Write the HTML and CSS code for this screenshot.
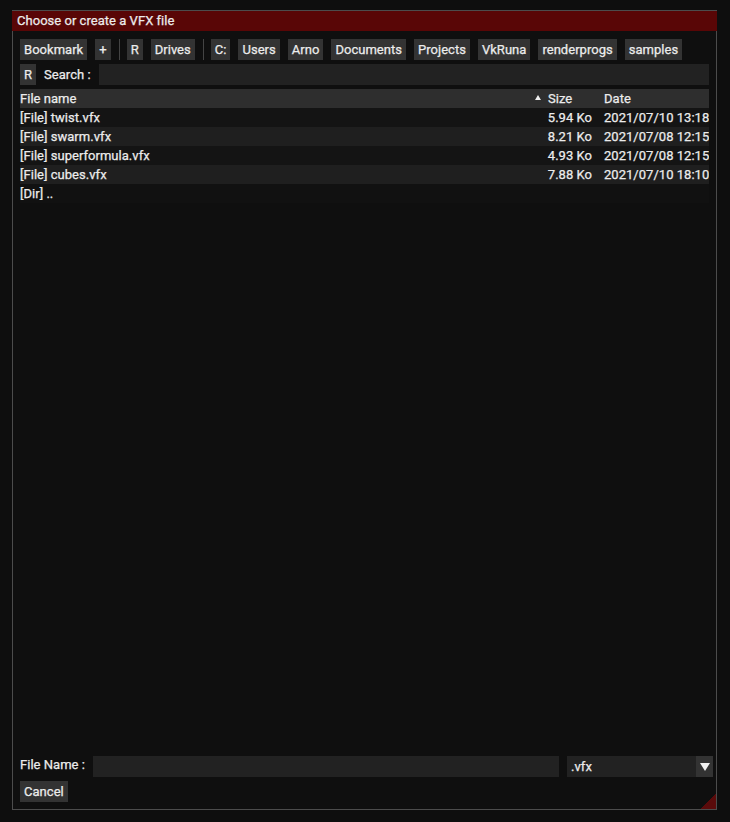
FILE: index.html
```html
<!DOCTYPE html>
<html>
<head>
<meta charset="utf-8">
<link rel="stylesheet" href="styles.css">
</head>
<body>
<div class="window">
  <div class="titlebar">Choose or create a VFX file</div>
  <div class="content">
    <div class="toolbar">
      <span class="btn">Bookmark</span>
      <span class="btn">+</span>
      <span class="sep"></span>
      <span class="btn">R</span>
      <span class="btn">Drives</span>
      <span class="sep"></span>
      <span class="btn">C:</span>
      <span class="btn">Users</span>
      <span class="btn">Arno</span>
      <span class="btn">Documents</span>
      <span class="btn">Projects</span>
      <span class="btn">VkRuna</span>
      <span class="btn">renderprogs</span>
      <span class="btn">samples</span>
    </div>
    <div class="searchrow">
      <span class="btn">R</span>
      <span class="label">Search :</span>
      <div class="input"></div>
    </div>
    <div class="list">
      <div class="row head">
        <div class="c name">File name<span class="sortarrow"></span></div>
        <div class="c size-h">Size</div>
        <div class="c date">Date</div>
      </div>
      <div class="row odd">
        <div class="c name">[File] twist.vfx</div>
        <div class="c size">5.94 Ko</div>
        <div class="c date">2021/07/10 13:18</div>
      </div>
      <div class="row even">
        <div class="c name">[File] swarm.vfx</div>
        <div class="c size">8.21 Ko</div>
        <div class="c date">2021/07/08 12:15</div>
      </div>
      <div class="row odd">
        <div class="c name">[File] superformula.vfx</div>
        <div class="c size">4.93 Ko</div>
        <div class="c date">2021/07/08 12:15</div>
      </div>
      <div class="row even">
        <div class="c name">[File] cubes.vfx</div>
        <div class="c size">7.88 Ko</div>
        <div class="c date">2021/07/10 18:10</div>
      </div>
      <div class="row dir">
        <div class="c name">[Dir] ..</div>
        <div class="c size"></div>
        <div class="c date"></div>
      </div>
    </div>
    <div class="filerow">
      <span class="label flabel">File Name :</span>
      <div class="input fname"></div>
      <div class="combo">
        <span class="combo-text">.vfx</span>
        <span class="combo-arrow"><svg width="10" height="8" viewBox="0 0 10 8"><polygon points="0,0 10,0 5,8" fill="#f0f0f0"/></svg></span>
      </div>
    </div>
    <div class="bottomrow">
      <span class="btn">Cancel</span>
    </div>
  </div>
  <div class="grip"></div>
</div>
</body>
</html>
```

FILE: styles.css
```css
html, body {
  margin: 0;
  padding: 0;
  background: #0e0e0e;
}
body {
  font-family: Roboto, "Liberation Sans", sans-serif;
  font-size: 13px;
  color: #ececec;
  letter-spacing: 0.03px;
  -webkit-text-stroke: 0.25px #ececec;
  width: 730px;
  height: 822px;
  overflow: hidden;
}
.window {
  position: relative;
  margin: 10px 0 0 12px;
  width: 705px;
  height: 800px;
  box-sizing: border-box;
  border: 1px solid #4c4c4c;
  background: #0f0f0f;
  display: flex;
  flex-direction: column;
}
.titlebar {
  height: 20px;
  line-height: 20px;
  background: #590606;
  margin: -1px -1px 0 -1px;
  border-top: 1px solid #4c4c4c;
  padding-left: 5px;
  white-space: nowrap;
}
.content {
  flex: 1;
  display: flex;
  flex-direction: column;
  padding: 8px 7px 7px 7px;
  min-height: 0;
}
.toolbar {
  display: flex;
  gap: 8px;
  height: 21px;
}
.btn {
  display: inline-block;
  background: #333333;
  height: 21px;
  line-height: 21px;
  padding: 0 4px;
  white-space: nowrap;
}
.sep {
  width: 1px;
  height: 21px;
  background: #444444;
  margin-right: -1px;
}
.searchrow {
  display: flex;
  gap: 8px;
  margin-top: 4px;
  height: 21px;
  line-height: 21px;
}
.label {
  white-space: nowrap;
}
.flabel {
  line-height: 17px;
}
.input {
  flex: 1;
  background: #222222;
  height: 21px;
}
.list {
  flex: 1;
  margin-top: 4px;
  display: flex;
  flex-direction: column;
}
.row {
  display: grid;
  grid-template-columns: 1fr 56px 109px;
  height: 19px;
  line-height: 19px;
}
.row.head {
  background: #2e2e2e;
}
.row.odd {
  background: #141414;
}
.row.even {
  background: #1f1f1f;
}
.row.dir {
  background: #111111;
}
.c {
  white-space: nowrap;
  overflow: hidden;
}
.c.name {
  position: relative;
}
.sortarrow {
  position: absolute;
  right: 3px;
  top: 6px;
  width: 0;
  height: 0;
  border-left: 3px solid transparent;
  border-right: 3px solid transparent;
  border-bottom: 5px solid #f0f0f0;
}
.size-h {
  padding-left: 4px;
}
.size {
  text-align: right;
  padding-right: 8px;
}
.date {
  padding-left: 4px;
}
.filerow {
  display: flex;
  gap: 8px;
  height: 21px;
  line-height: 21px;
  margin-right: -4px;
  margin-top: 4px;
}
.fname {
  flex: none;
  width: 466px;
}
.combo {
  flex: 1;
  display: flex;
  background: #222222;
  height: 21px;
}
.combo-text {
  flex: 1;
  padding-left: 4px;
}
.combo-arrow {
  width: 17px;
  height: 21px;
  background: #333333;
  display: flex;
  align-items: center;
  justify-content: center;
}
.combo-arrow svg {
  display: block;
}
.bottomrow {
  display: flex;
  margin-top: 4px;
  height: 21px;
}
.grip {
  position: absolute;
  right: 0;
  bottom: 0;
  width: 16px;
  height: 16px;
  background: linear-gradient(to top left, #5a0b0b 50%, transparent 50%);
}
```
